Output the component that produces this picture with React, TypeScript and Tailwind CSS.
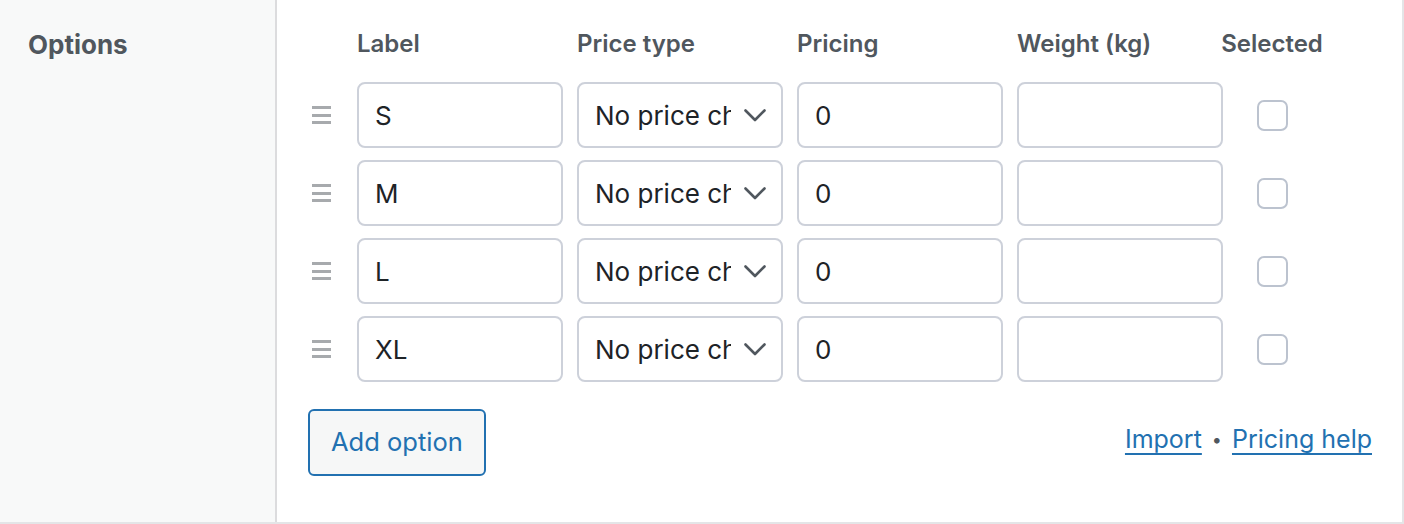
const rows = ['S', 'M', 'L', 'XL'];

function DragHandle() {
  return (
    <div className="flex flex-col gap-[4.5px] w-[19px] ml-[4px]">
      <span className="h-[3px] bg-[#a7aaad]" />
      <span className="h-[3px] bg-[#a7aaad]" />
      <span className="h-[3px] bg-[#a7aaad]" />
    </div>
  );
}

function Chevron() {
  return (
    <svg width="22" height="13" viewBox="0 0 22 13" fill="none" className="shrink-0">
      <polyline points="1.5,1.5 11,11 20.5,1.5" stroke="#50575e" strokeWidth="2.6" strokeLinecap="round" strokeLinejoin="round" />
    </svg>
  );
}

const box =
  'h-[66px] w-[206px] rounded-[8px] border-2 border-[#cdd1da] bg-white text-[26px] text-[#1e2327] flex items-center';
const head = 'text-[24px] font-semibold text-[#50575e] leading-[36px] pb-[8px] whitespace-nowrap';

export default function App() {
  return (
    <div
      className="w-[1404px] h-[524px] flex bg-white border-r-2 border-b-2 border-[#e4e5e7]"
      style={{ fontFamily: 'Inter, "Noto Sans", sans-serif' }}
    >
      {/* Left label column */}
      <div className="w-[277px] shrink-0 bg-[#f8f9f9] border-r-2 border-[#dcdcde] pl-[28px] pt-[27px]">
        <h2 className="text-[26px] font-bold text-[#50575e] leading-[36px]">Options</h2>
      </div>

      {/* Options table */}
      <div className="flex-1 pl-[31px] pr-[30px] pt-[26px]">
        <div className="grid grid-cols-[35px_206px_206px_206px_206px_70px] gap-x-[14px] gap-y-[12px] items-center">
          <div />
          <div className={head}>Label</div>
          <div className={head}>Price type</div>
          <div className={head}>Pricing</div>
          <div className={head}>Weight (kg)</div>
          <div className={`${head} flex justify-center`}>Selected</div>

          {rows.map((label) => (
            <div key={label} className="contents">
              <DragHandle />
              <div className={`${box} pl-[16px]`}>{label}</div>
              <div className={`${box} pl-[16px] pr-[15px] justify-between`}>
                <span className="w-[136px] overflow-hidden whitespace-nowrap">No price change</span>
                <Chevron />
              </div>
              <div className={`${box} pl-[16px]`}>0</div>
              <div className={box} />
              <div className="flex justify-center">
                <span className="w-[31px] h-[31px] rounded-[7px] border-2 border-[#bcc3cf] bg-white" />
              </div>
            </div>
          ))}
        </div>

        <div className="flex items-start justify-between mt-[27px]">
          <button className="h-[67px] px-[21px] rounded-[6px] border-2 border-[#2271b1] bg-[#f6f7f7] text-[25.5px] text-[#2271b1]">
            Add option
          </button>
          <div className="flex items-center gap-[10px] text-[25px] text-[#2271b1] mt-[12px]">
            <a className="underline underline-offset-[5px]">Import</a>
            <span className="text-[#50575e] text-[18px]">•</span>
            <a className="underline underline-offset-[5px]">Pricing help</a>
          </div>
        </div>
      </div>
    </div>
  );
}
